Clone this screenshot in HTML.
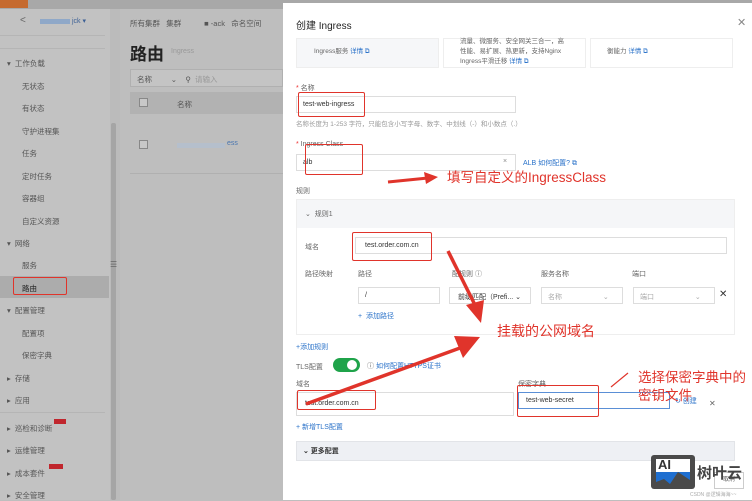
<!DOCTYPE html>
<html><head><meta charset="utf-8"><style>
*{margin:0;padding:0;box-sizing:border-box}
body{width:752px;height:500px;overflow:hidden;position:relative;background:#bebebe;font-family:"Liberation Sans","Noto Sans CJK SC",sans-serif;font-size:7px;color:#333}
.a{position:absolute;white-space:nowrap}
.g{color:#666}
.sb{color:#555;font-size:7.5px}
.inp{position:absolute;border:1px solid #ddd;background:#fff;height:17px}
.red{position:absolute;border:1.5px solid #e0342b;border-radius:2px}
.rt{position:absolute;color:#e0342b;white-space:nowrap}
.lk{color:#2a72c9}
</style></head><body>
<div class="a" style="left:0;top:0;width:752px;height:9px;background:#a8a8a8"></div>
<div class="a" style="left:0;top:0;width:28px;height:8px;background:#c56a2f"></div>
<div class="a" style="left:0;top:9px;width:110px;height:491px;background:#c2c2c2"></div>
<div class="a" style="left:110px;top:9px;width:10px;height:491px;background:#bbb"></div>
<div class="a" style="left:111px;top:123px;width:5px;height:377px;background:#a5a5a5;border-radius:2px"></div>
<div class="a g" style="left:20px;top:15px;font-size:10px">&lt;</div>
<div class="a" style="left:40px;top:19px;width:30px;height:5px;background:#8fa8c8"></div>
<div class="a" style="left:72px;top:17px;font-size:7px;color:#3a5f95">jck ▾</div>
<div class="a" style="left:0;top:35px;width:105px;height:1px;background:#b5b5b5"></div>
<div class="a" style="left:0;top:48px;width:105px;height:1px;background:#b5b5b5"></div>
<div class="a sb" style="left:7px;top:58px">▾&nbsp; 工作负载</div>
<div class="a sb" style="left:22px;top:81px">无状态</div>
<div class="a sb" style="left:22px;top:103px">有状态</div>
<div class="a sb" style="left:22px;top:126px">守护进程集</div>
<div class="a sb" style="left:22px;top:148px">任务</div>
<div class="a sb" style="left:22px;top:171px">定时任务</div>
<div class="a sb" style="left:22px;top:193px">容器组</div>
<div class="a sb" style="left:22px;top:216px">自定义资源</div>
<div class="a sb" style="left:7px;top:238px">▾&nbsp; 网络</div>
<div class="a sb" style="left:22px;top:260px">服务</div>
<div class="a" style="left:0;top:276px;width:109px;height:22px;background:#acacac"></div>
<div class="a sb" style="left:22px;top:283px;color:#222">路由</div>
<div class="red" style="left:13px;top:277px;width:54px;height:18px"></div>
<div class="a sb" style="left:7px;top:305px">▾&nbsp; 配置管理</div>
<div class="a sb" style="left:22px;top:328px">配置项</div>
<div class="a sb" style="left:22px;top:350px">保密字典</div>
<div class="a sb" style="left:7px;top:373px">▸&nbsp; 存储</div>
<div class="a sb" style="left:7px;top:395px">▸&nbsp; 应用</div>
<div class="a" style="left:0;top:412px;width:105px;height:1px;background:#b5b5b5"></div>
<div class="a sb" style="left:7px;top:423px">▸&nbsp; 巡检和诊断</div>
<div class="a" style="left:54px;top:419px;width:12px;height:5px;background:#c0262d"></div>
<div class="a sb" style="left:7px;top:445px">▸&nbsp; 运维管理</div>
<div class="a sb" style="left:7px;top:468px">▸&nbsp; 成本套件</div>
<div class="a" style="left:49px;top:464px;width:14px;height:5px;background:#c0262d"></div>
<div class="a sb" style="left:7px;top:490px">▸&nbsp; 安全管理</div>
<div class="a g" style="left:110px;top:260px;font-size:8px">☰</div>
<div class="a sb" style="left:130px;top:18px">所有集群&nbsp;&nbsp; 集群&nbsp;&nbsp;&nbsp;&nbsp;&nbsp;&nbsp;&nbsp;&nbsp;&nbsp;&nbsp; ■ -ack&nbsp;&nbsp; 命名空间</div>
<div class="a" style="left:130px;top:40px;font-size:17px;color:#222;font-weight:bold">路由</div>
<div class="a" style="left:171px;top:48px;color:#999">Ingress</div>
<div class="a" style="left:130px;top:69px;width:153px;height:18px;border:1px solid #b0b0b0;background:#c4c4c4"></div>
<div class="a sb" style="left:137px;top:74px">名称&nbsp;&nbsp;&nbsp;&nbsp;&nbsp;&nbsp;&nbsp;&nbsp; ⌄&nbsp;&nbsp;&nbsp; ⚲&nbsp; <span style="color:#999">请输入</span></div>
<div class="a" style="left:130px;top:92px;width:153px;height:22px;background:#b2b2b2"></div>
<div class="a" style="left:139px;top:98px;width:9px;height:9px;border:1px solid #888;background:#c8c8c8"></div>
<div class="a sb" style="left:177px;top:99px">名称</div>
<div class="a" style="left:139px;top:140px;width:9px;height:9px;border:1px solid #888;background:#c8c8c8"></div>
<div class="a" style="left:177px;top:143px;width:48px;height:5px;background:#b5bfcc"></div>
<div class="a" style="left:227px;top:140px;color:#4a76b0">ess</div>
<div class="a" style="left:130px;top:173px;width:153px;height:1px;background:#b0b0b0"></div>
<div class="a" style="left:283px;top:3px;width:469px;height:497px;background:#fff"></div>
<div class="a" style="left:296px;top:17px;font-size:10px;color:#222">创建 Ingress</div>
<div class="a" style="left:737px;top:16px;font-size:11px;color:#888">✕</div>
<div class="a" style="left:296px;top:38px;width:143px;height:30px;background:#f6f7f9;border:1px solid #eee"></div>
<div class="a" style="left:443px;top:38px;width:143px;height:30px;border:1px solid #eee"></div>
<div class="a" style="left:590px;top:38px;width:143px;height:30px;border:1px solid #eee"></div>
<div class="a g" style="left:314px;top:45px;font-size:6.5px">Ingress服务 <span class="lk">详情 ⧉</span></div>
<div class="a g" style="left:460px;top:37px;font-size:6.5px;line-height:10px">流量、微服务、安全网关三合一，高<br>性能、易扩展、热更新，支持Nginx<br>Ingress平滑迁移 <span class="lk">详情 ⧉</span></div>
<div class="a g" style="left:607px;top:45px;font-size:6.5px">衡能力 <span class="lk">详情 ⧉</span></div>
<div class="a g" style="left:296px;top:83px"><span style="color:#e33">*</span> 名称</div>
<div class="inp" style="left:296px;top:96px;width:220px"></div>
<div class="a" style="left:303px;top:101px;color:#333">test-web-ingress</div>
<div class="red" style="left:298px;top:92px;width:67px;height:25px"></div>
<div class="a" style="left:296px;top:118px;color:#999;font-size:6.5px">名称长度为 1-253 字符，只能包含小写字母、数字、中划线（-）和小数点（.）</div>
<div class="a g" style="left:296px;top:141px"><span style="color:#e33">*</span> Ingress Class</div>
<div class="inp" style="left:296px;top:154px;width:220px"></div>
<div class="a" style="left:303px;top:159px">alb</div>
<div class="a" style="left:503px;top:158px;color:#888">×</div>
<div class="a lk" style="left:523px;top:158px">ALB 如何配置? ⧉</div>
<div class="red" style="left:305px;top:144px;width:58px;height:31px"></div>
<svg class="a" style="left:380px;top:168px" width="70" height="20"><path d="M8 14 L48 10" stroke="#e0342b" stroke-width="3"/><path d="M44 4 L58 9 L46 16 Z" fill="#e0342b"/></svg>
<div class="rt" style="left:447px;top:166px;font-size:13.5px">填写自定义的IngressClass</div>
<div class="a g" style="left:296px;top:186px">规则</div>
<div class="a" style="left:296px;top:199px;width:439px;height:136px;border:1px solid #eee;background:#fff"></div>
<div class="a" style="left:297px;top:200px;width:437px;height:28px;background:#f5f6f8"></div>
<div class="a g" style="left:305px;top:209px">⌄&nbsp; 规则1</div>
<div class="a g" style="left:305px;top:242px">域名</div>
<div class="inp" style="left:355px;top:237px;width:372px"></div>
<div class="a" style="left:365px;top:242px">test.order.com.cn</div>
<div class="red" style="left:352px;top:232px;width:80px;height:29px"></div>
<div class="a g" style="left:305px;top:269px">路径映射</div>
<div class="a g" style="left:358px;top:269px">路径</div>
<div class="a g" style="left:452px;top:269px">配规则 ⓘ</div>
<div class="a g" style="left:541px;top:269px">服务名称</div>
<div class="a g" style="left:632px;top:269px">端口</div>
<div class="inp" style="left:358px;top:287px;width:82px"></div>
<div class="a" style="left:365px;top:292px">/</div>
<div class="inp" style="left:449px;top:287px;width:82px"></div>
<div class="a" style="left:458px;top:292px">前缀匹配（Prefi... ⌄</div>
<div class="inp" style="left:541px;top:287px;width:82px"></div>
<div class="a" style="left:548px;top:292px;color:#aaa">名称&nbsp;&nbsp;&nbsp;&nbsp;&nbsp;&nbsp;&nbsp;&nbsp;&nbsp;&nbsp;&nbsp;&nbsp;&nbsp;&nbsp;&nbsp;&nbsp;&nbsp;&nbsp;&nbsp;&nbsp; ⌄</div>
<div class="inp" style="left:633px;top:287px;width:82px"></div>
<div class="a" style="left:640px;top:292px;color:#aaa">端口&nbsp;&nbsp;&nbsp;&nbsp;&nbsp;&nbsp;&nbsp;&nbsp;&nbsp;&nbsp;&nbsp;&nbsp;&nbsp;&nbsp;&nbsp;&nbsp;&nbsp;&nbsp;&nbsp;&nbsp; ⌄</div>
<div class="a" style="left:719px;top:289px;font-size:10px">✕</div>
<div class="a lk" style="left:358px;top:311px">+&nbsp; 添加路径</div>
<svg class="a" style="left:440px;top:245px" width="50" height="85"><path d="M8 6 L36 62" stroke="#e0342b" stroke-width="3.5"/><path d="M26 60 L41 78 L44 55 Z" fill="#e0342b"/></svg>
<div class="rt" style="left:497px;top:321px;font-size:14px">挂载的公网域名</div>
<div class="a lk" style="left:296px;top:342px">+添加规则</div>
<div class="a g" style="left:296px;top:362px">TLS配置</div>
<div class="a" style="left:333px;top:358px;width:27px;height:14px;border-radius:7px;background:#1fa34a"></div>
<div class="a" style="left:347px;top:360px;width:10px;height:10px;border-radius:5px;background:#fff"></div>
<div class="a lk" style="left:367px;top:361px"><span style="color:#666">ⓘ</span> 如何配置HTTPS证书</div>
<div class="a g" style="left:296px;top:379px">域名</div>
<div class="a g" style="left:518px;top:379px">保密字典</div>
<div class="inp" style="left:296px;top:392px;width:218px;height:24px"></div>
<div class="a" style="left:305px;top:400px">test.order.com.cn</div>
<div class="red" style="left:297px;top:390px;width:79px;height:20px"></div>
<div class="inp" style="left:518px;top:392px;width:152px;height:17px;border-color:#5a8fd6"></div>
<div class="a" style="left:526px;top:397px">test-web-secret</div>
<div class="a" style="left:657px;top:396px;color:#888">×</div>
<div class="red" style="left:517px;top:385px;width:82px;height:32px"></div>
<div class="a lk" style="left:675px;top:396px">↻ 创建</div>
<div class="a" style="left:709px;top:399px;color:#666;font-size:8px">✕</div>
<svg class="a" style="left:300px;top:330px" width="200" height="80"><path d="M6 74 L160 18" stroke="#e0342b" stroke-width="3.5"/><path d="M154 6 L180 7 L163 28 Z" fill="#e0342b"/></svg>
<svg class="a" style="left:608px;top:368px" width="24" height="22"><path d="M3 19 L20 5" stroke="#e0342b" stroke-width="1.2"/></svg>
<div class="rt" style="left:638px;top:369px;font-size:13.5px;line-height:18px">选择保密字典中的<br>密钥文件</div>
<div class="a lk" style="left:296px;top:422px">+ 新增TLS配置</div>
<div class="a" style="left:296px;top:441px;width:439px;height:20px;background:#eef0f4;border:1px solid #e2e4e8"></div>
<div class="a" style="left:303px;top:446px;color:#333;font-weight:bold">⌄ 更多配置</div>
<div class="a" style="left:283px;top:462px;width:469px;height:38px;background:#fff"></div>
<div class="a" style="left:714px;top:472px;width:30px;height:17px;border:1px solid #ccc;font-size:6px;color:#555;text-align:center;line-height:15px">取消</div>
<div class="a" style="left:651px;top:455px;width:44px;height:34px;border-radius:3px;background:#4a4a4a"></div>
<div class="a" style="left:656px;top:459px;width:34px;height:26px;background:#fff"></div>
<div class="a" style="left:656px;top:472px;width:34px;height:13px;background:#1f6fd0"></div>
<svg class="a" style="left:656px;top:470px" width="34" height="16"><path d="M0 16 L0 12 L8 9 L14 14 L22 2 L34 10 L34 16 Z" fill="#4a4a4a"/></svg>
<div class="a" style="left:658px;top:457px;font-size:13px;font-weight:bold;color:#333">AI</div>
<div class="a" style="left:697px;top:462px;font-size:15px;color:#444;font-weight:bold">树叶云</div>
<div class="a" style="left:690px;top:491px;font-size:5px;color:#aaa">CSDN @逻辑海海~~</div>
</body></html>
